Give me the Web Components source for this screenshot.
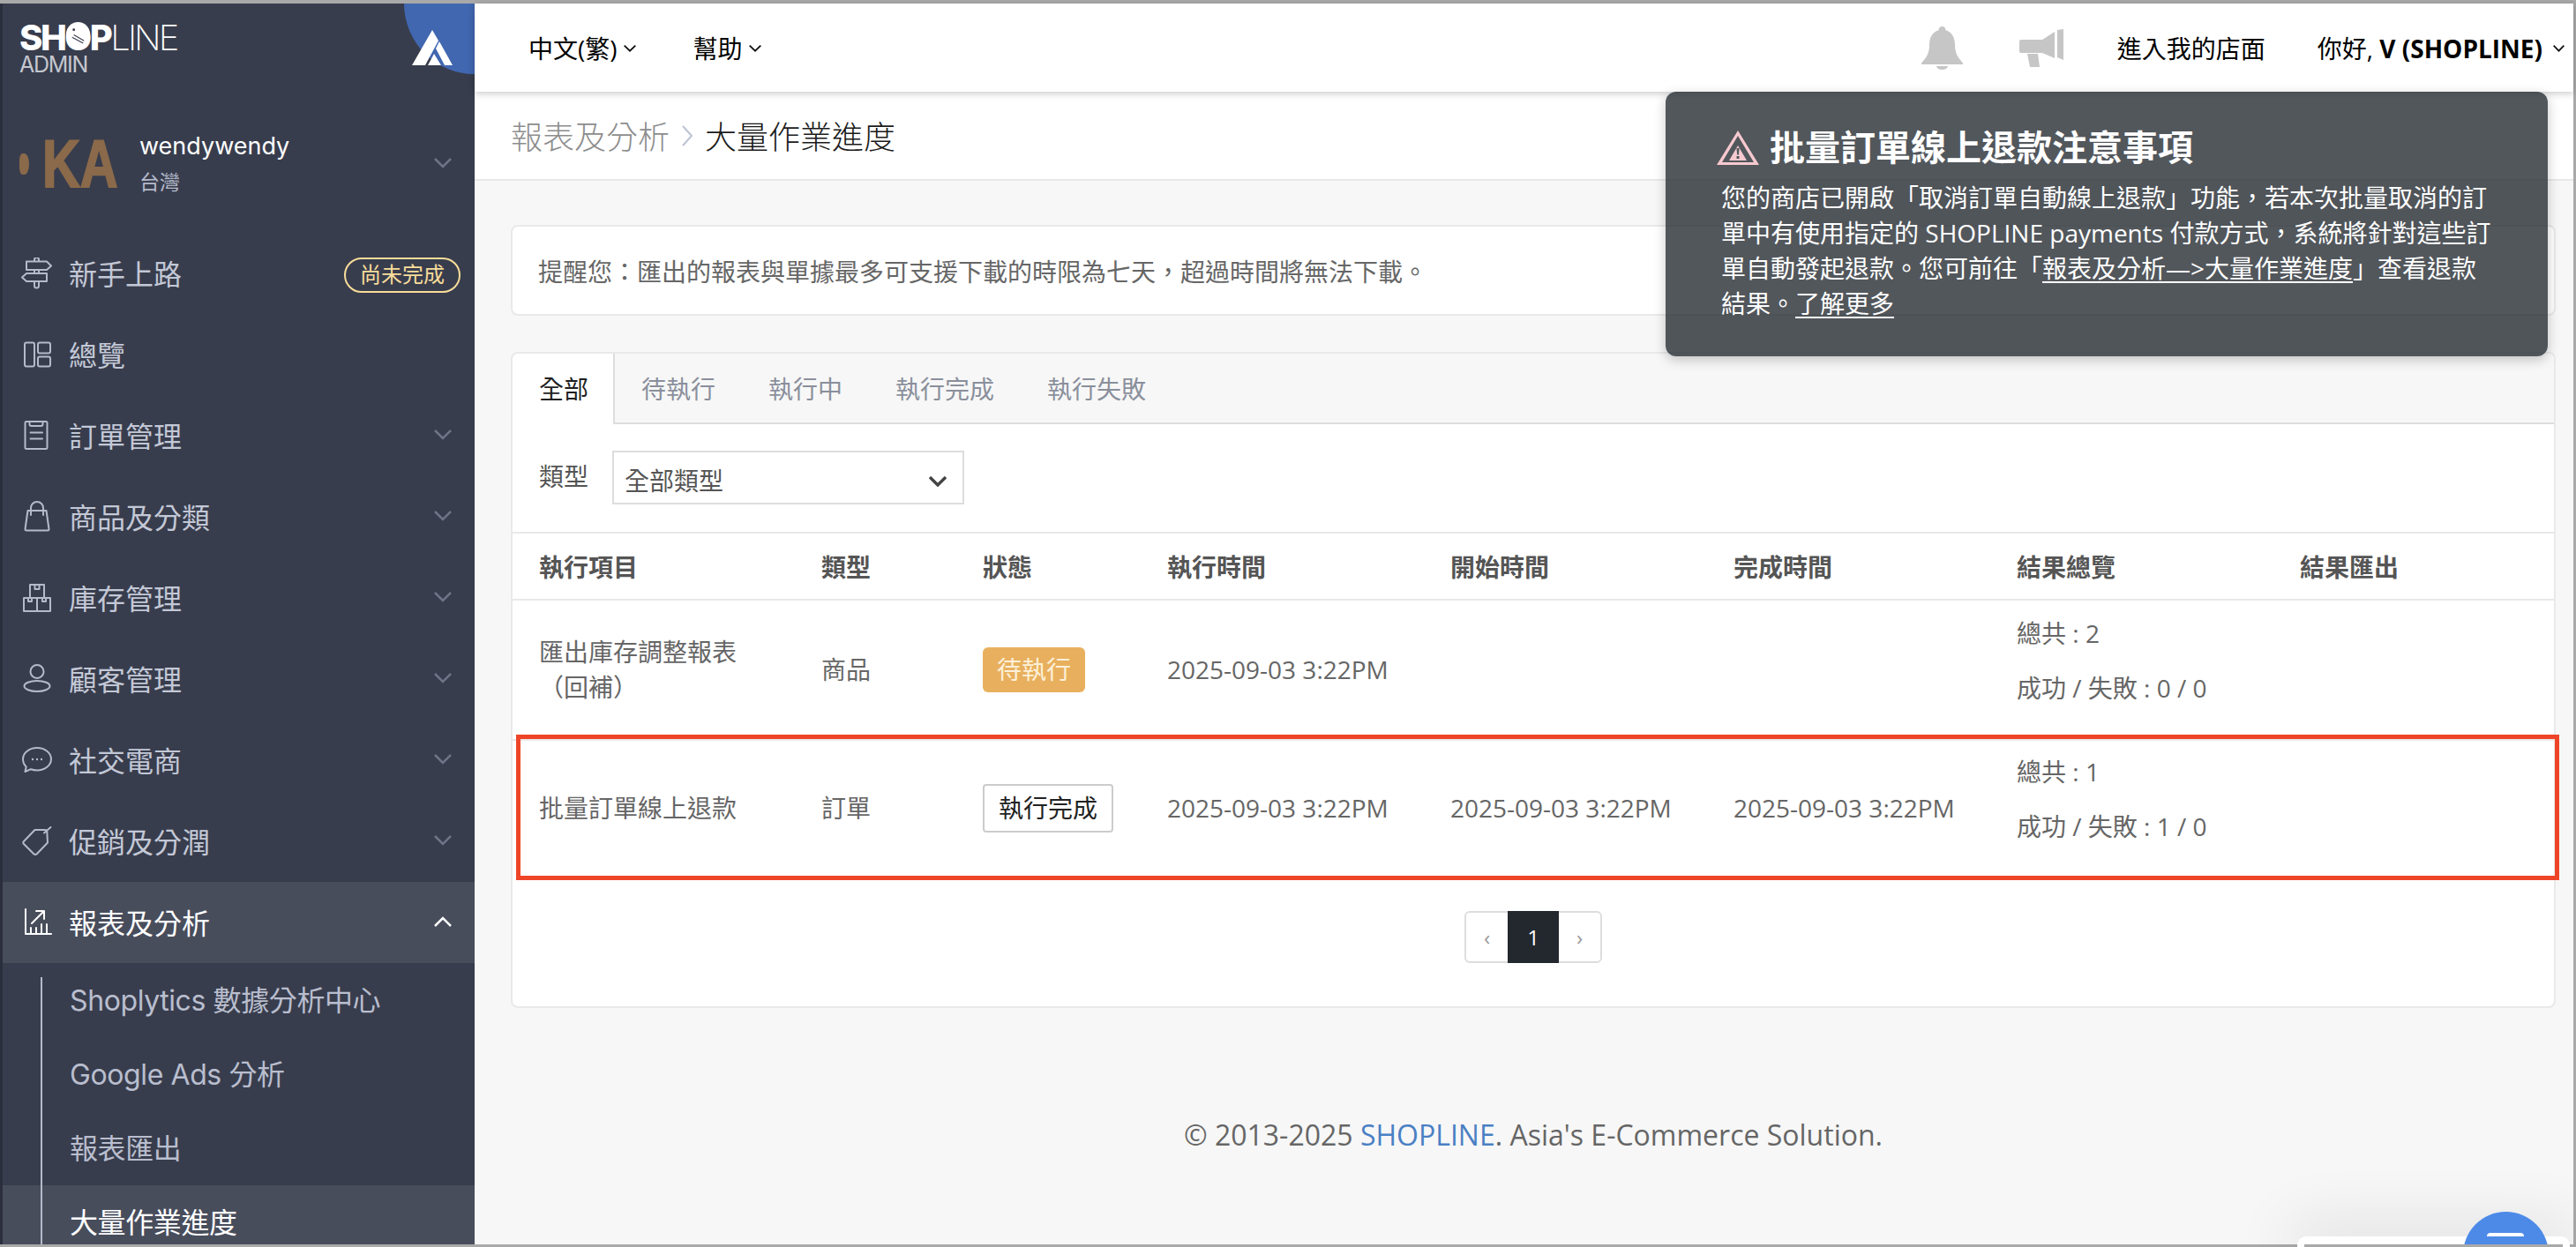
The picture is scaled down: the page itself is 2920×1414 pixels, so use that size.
<!DOCTYPE html>
<html lang="zh-Hant">
<head>
<meta charset="utf-8">
<title>大量作業進度</title>
<style>
    html, body { margin: 0; height: 100%; }
    body {
        width: 2920px;
        height: 1414px;
        overflow: hidden;
        font-family: "Open Sans", "Noto Sans CJK TC", sans-serif;
    }
</style>
</head>
<body>
<sl-app>
    <sl-sidebar slot="side">
        <sl-nav-item icon="sign" nochevron>新手上路<sl-pill slot="extra">尚未完成</sl-pill></sl-nav-item>
        <sl-nav-item icon="dash" nochevron>總覽</sl-nav-item>
        <sl-nav-item icon="order">訂單管理</sl-nav-item>
        <sl-nav-item icon="bag">商品及分類</sl-nav-item>
        <sl-nav-item icon="boxes">庫存管理</sl-nav-item>
        <sl-nav-item icon="person">顧客管理</sl-nav-item>
        <sl-nav-item icon="chat">社交電商</sl-nav-item>
        <sl-nav-item icon="tag">促銷及分潤</sl-nav-item>
        <sl-nav-item icon="chart" open>報表及分析</sl-nav-item>
        <sl-sub-nav>
            <sl-sub-item>Shoplytics 數據分析中心</sl-sub-item>
            <sl-sub-item>Google Ads 分析</sl-sub-item>
            <sl-sub-item>報表匯出</sl-sub-item>
            <sl-sub-item active>大量作業進度</sl-sub-item>
        </sl-sub-nav>
    </sl-sidebar>

    <sl-topbar slot="main"></sl-topbar>
    <sl-breadcrumb slot="main" parent="報表及分析">大量作業進度</sl-breadcrumb>
    <sl-content slot="main">
        <sl-notice>提醒您：匯出的報表與單據最多可支援下載的時限為七天，超過時間將無法下載。</sl-notice>
        <sl-jobs-card>
            <sl-job-row>
                <span slot="name">匯出庫存調整報表（回補）</span>
                <span slot="type">商品</span>
                <sl-status slot="status" kind="pending">待執行</sl-status>
                <span slot="run">2025-09-03 3:22PM</span>
                <sl-result slot="result" total="2" ok="0" fail="0"></sl-result>
            </sl-job-row>
            <sl-job-row highlighted>
                <span slot="name">批量訂單線上退款</span>
                <span slot="type">訂單</span>
                <sl-status slot="status" kind="done">執行完成</sl-status>
                <span slot="run">2025-09-03 3:22PM</span>
                <span slot="start">2025-09-03 3:22PM</span>
                <span slot="end">2025-09-03 3:22PM</span>
                <sl-result slot="result" total="1" ok="1" fail="0"></sl-result>
            </sl-job-row>
        </sl-jobs-card>
        <sl-footer></sl-footer>
    </sl-content>

    <sl-toast slot="over"></sl-toast>
    <sl-chat slot="over"></sl-chat>
</sl-app>

<script>
    /**
     * Icons of the sidebar, all drawn on a 36x36 box.
     */
    const NAV_ICONS = {
        sign: `<path d="M6 4.500h23l5 5-5 4.500H6zM29 18H6l-5 4.500L6 27h23zM15 4.500V2.500a2.500 2.500 0 0 1 5 0v2M15 14v4M20 14v4M15 27v5a2.500 2.500 0 0 0 5 0v-5"/>`,
        dash: `<rect x="4" y="4.500" width="11" height="27" rx="2"/><rect x="19" y="4.500" width="14" height="12" rx="2"/><rect x="19" y="20.500" width="14" height="11" rx="2"/>`,
        order: `<rect x="4.500" y="2" width="25" height="31" rx="1.500"/><path d="M9.500 2v3a2 2 0 0 0 2 2h11a2 2 0 0 0 2-2V2M10.500 14.500H24M10.500 21.500H24"/>`,
        bag: `<path d="M7.500 11h21l3 21a1.500 1.500 0 0 1-1.500 1.500H6A1.500 1.500 0 0 1 4.500 32zM11 16V8a7 7 0 0 1 14 0v8"/>`,
        boxes: `<path d="M10 18V3h16v15M3 33V18h30v15zM18 18v15M15.500 3v5h5V3M8 18v4h4v-4M24 18v4h4v-4"/>`,
        person: `<circle cx="18" cy="9.500" r="7.500"/><ellipse cx="18" cy="26" rx="14.500" ry="6"/>`,
        chat: `<path d="M18 4c8.800 0 16 5.600 16 12.700S26.800 29.400 18 29.400c-2.500 0-5-.4-7-1.200L4.500 31l1.200-5.500C3.400 23.200 2 20.100 2 16.700 2 9.600 9.200 4 18 4z"/><g fill="#b5bacb" stroke="none"><circle cx="13" cy="17" r="1.200"/><circle cx="18" cy="17" r="1.200"/><circle cx="23" cy="17" r="1.200"/></g>`,
        tag: `<path d="M3 18 15.500 5H27q2 0 2.300 2L30 19.500 18 32q-2 2-4 0L3 21q-1.500-1.500 0-3zM26 8.500 33.500 2"/>`,
        chart: `<path d="M5 3v28h29M11 31v-7M17 31v-7M23 31V20M29 31V20M12 19 25 6M17 5h9v9"/>`
    };

    const chevron = (w, h, color, stroke, up) => `
        <svg width="${w}" height="${h}" viewBox="0 0 20 12" fill="none" stroke="${color}" stroke-width="${stroke}" preserveAspectRatio="none">
            <path d="${up ? 'M1 11l9-9 9 9' : 'M1 1l9 9 9-9'}"/>
        </svg>`;

    /**
     * Base class: clones the class' markup into an open shadow root.
     */
    class SlElement extends HTMLElement {
        connectedCallback() {
            if (this.shadowRoot) {
                return;
            }

            const $template = document.createElement('template');
            $template.innerHTML = this.markup();

            this.attachShadow({ mode: 'open' }).appendChild($template.content.cloneNode(true));
        }
    }

    class SlApp extends SlElement {
        markup() {
            return `
                <style>
                    :host {
                        display: flex;
                        position: relative;
                        box-sizing: border-box;
                        width: 2920px;
                        height: 1414px;
                        padding: 4px 3px 3px 0;
                        background: #a9a9a9;
                        overflow: hidden;
                    }
                    .main {
                        flex: 1;
                        min-width: 0;
                        display: flex;
                        flex-direction: column;
                        background: #f7f7f7;
                    }
                </style>
                <slot name="side"></slot>
                <div class="main"><slot name="main"></slot></div>
                <slot name="over"></slot>
            `;
        }
    }

    class SlSidebar extends SlElement {
        markup() {
            return `
                <style>
                    :host {
                        display: block;
                        position: relative;
                        flex: none;
                        box-sizing: border-box;
                        width: 538px;
                        height: 1407px;
                        border-left: 3px solid #2b2f3d;
                        background: #383d4d;
                        overflow: hidden;
                        font-family: "Inter", "Noto Sans CJK TC", sans-serif;
                    }
                    .corner {
                        position: absolute;
                        top: 0;
                        right: 0;
                        width: 80px;
                        height: 80px;
                        background: #4167b0;
                        border-bottom-left-radius: 80px;
                    }
                    .mark {
                        position: absolute;
                        top: 30px;
                        right: 25px;
                    }
                    .brand {
                        height: 104px;
                        box-sizing: border-box;
                        padding: 14px 0 0 19px;
                        color: #fff;
                    }
                    .logo {
                        display: block;
                        font-size: 40px;
                        line-height: 50px;
                        white-space: nowrap;
                    }
                    .logo b { font-weight: 800; letter-spacing: -2.500px; }
                    .logo i { font-style: normal; font-weight: 200; letter-spacing: -3px; }
                    .logo .o { position: relative; }
                    .logo svg { position: absolute; left: 2px; top: 6px; }
                    .admin {
                        display: block;
                        margin-top: -9px;
                        font-size: 25px;
                        line-height: 28px;
                        letter-spacing: -1.300px;
                        color: #c4c7cf;
                    }
                    .profile {
                        display: flex;
                        align-items: center;
                        height: 156px;
                        padding: 0 26px 0 19px;
                    }
                    .avatar {
                        flex: none;
                        display: flex;
                        align-items: center;
                        width: 112px;
                        height: 70px;
                        color: #8a6a4a;
                        font-family: "Liberation Sans", sans-serif;
                        font-weight: 700;
                        font-size: 76px;
                        line-height: 70px;
                    }
                    .avatar .dot {
                        flex: none;
                        width: 11px;
                        height: 24px;
                        margin-right: 15px;
                        border-radius: 40% 60% 60% 40%;
                        background: #8a6a4a;
                    }
                    .avatar .ka {
                        flex: none;
                        width: 0;
                        transform: scale(.78, 1);
                        transform-origin: left center;
                        white-space: nowrap;
                        -webkit-text-stroke: 2px #8a6a4a;
                    }
                    .who { flex: 1; margin-left: 24px; }
                    .who b {
                        display: block;
                        margin-top: -2px;
                        font-weight: 400;
                        font-size: 27px;
                        line-height: 38px;
                        color: #fff;
                    }
                    .who span {
                        display: block;
                        margin-top: 6px;
                        font-size: 23px;
                        line-height: 32px;
                        color: #b5bacb;
                    }
                    .profile svg { margin-top: -2px; }
                </style>
                <div class="corner"></div>
                <svg class="mark" width="46" height="40" viewBox="0 0 46 40" fill="#fff">
                    <path d="M23 0 0 40h15L30 12zM31 13l15 27h-9L27 21zM25 27l-7 13h15z"/>
                </svg>
                <div class="brand">
                    <span class="logo"><b>SH<span class="o">O<svg width="27" height="29" viewBox="0 0 28 30"><circle cx="14" cy="15" r="14" fill="#fff"/><path d="M7 19l13 7M9 16l12 7" stroke="#383d4d" stroke-width="1.200"/><circle cx="9" cy="10" r="1.500" fill="#383d4d"/></svg></span>P</b><i>LINE</i></span>
                    <span class="admin">ADMIN</span>
                </div>
                <div class="profile">
                    <div class="avatar"><span class="dot"></span><span class="ka">KA</span></div>
                    <div class="who"><b>wendywendy</b><span>台灣</span></div>
                    ${chevron(20, 12, '#6f7488', 2.5)}
                </div>
                <slot></slot>
            `;
        }
    }

    class SlNavItem extends SlElement {
        markup() {
            const open = this.hasAttribute('open');
            const noChevron = this.hasAttribute('nochevron');
            const stroke = open ? '#fff' : '#b5bacb';

            return `
                <style>
                    :host {
                        display: flex;
                        align-items: center;
                        height: 92px;
                        padding: 0 26px 0 21px;
                        box-sizing: border-box;
                        font-size: 32px;
                        color: ${open ? '#fff' : '#c3c8d6'};
                        background: ${open ? '#484d5c' : 'transparent'};
                    }
                    svg.icon { flex: none; margin-right: 18px; }
                    svg:not(.icon) { margin-top: -2px; }
                    .label { flex: 1; margin-top: -3px; }
                    ::slotted([slot="extra"]) { margin-right: -10px; }
                </style>
                <svg class="icon" width="36" height="36" viewBox="0 0 36 36" fill="none" stroke="${stroke}" stroke-width="2" stroke-linejoin="round" stroke-linecap="round">
                    ${NAV_ICONS[this.getAttribute('icon')]}
                </svg>
                <span class="label"><slot></slot></span>
                <slot name="extra"></slot>
                ${noChevron ? '' : chevron(20, 12, open ? '#fff' : '#6f7488', 2.5, open)}
            `;
        }
    }

    class SlPill extends SlElement {
        markup() {
            return `
                <style>
                    :host {
                        display: block;
                        box-sizing: border-box;
                        width: 132px;
                        height: 40px;
                        margin-top: 3px;
                        border: 2px solid #f8dd9b;
                        border-radius: 20px;
                        font-size: 24px;
                        line-height: 35px;
                        text-align: center;
                        color: #f8dd9b;
                    }
                </style>
                <slot></slot>
            `;
        }
    }

    class SlSubNav extends SlElement {
        markup() {
            return `
                <style>
                    :host { display: block; position: relative; }
                    :host::after {
                        content: "";
                        position: absolute;
                        top: 16px;
                        bottom: 0;
                        left: 43px;
                        width: 2px;
                        background: #b5bacb;
                    }
                </style>
                <slot></slot>
            `;
        }
    }

    class SlSubItem extends SlElement {
        markup() {
            const active = this.hasAttribute('active');

            return `
                <style>
                    :host {
                        display: flex;
                        align-items: center;
                        box-sizing: border-box;
                        height: 84px;
                        padding: 0 0 5px 76px;
                        font-size: 32px;
                        letter-spacing: -.4px;
                        white-space: nowrap;
                        color: ${active ? '#fff' : '#b9bece'};
                        background: ${active ? '#484d5c' : 'transparent'};
                    }
                </style>
                <slot></slot>
            `;
        }
    }

    class SlTopbar extends SlElement {
        markup() {
            return `
                <style>
                    :host {
                        display: flex;
                        align-items: center;
                        position: relative;
                        z-index: 1;
                        flex: none;
                        height: 100px;
                        padding: 0 10px 0 61px;
                        background: #fff;
                        box-shadow: 0 2px 8px rgba(0, 0, 0, .22);
                        font-size: 28px;
                        color: #000;
                    }
                    .item { display: flex; align-items: center; gap: 7px; white-space: nowrap; }
                    .item svg { margin-top: 2px; }
                    .help { margin-left: 65px; }
                    .bell { margin-left: auto; }
                    .horn { margin-left: 64px; }
                    .shop { margin-left: 61px; }
                    .user { margin-left: 59px; gap: 12px; }
                    b { font-weight: 700; }
                </style>
                <span class="item">中文(繁)${chevron(14, 8, '#111', 2.6)}</span>
                <span class="item help">幫助${chevron(14, 8, '#111', 2.6)}</span>
                <svg class="bell" width="47" height="49" viewBox="0 0 47 49" fill="#c6c6c6">
                    <path d="M23.500 0c-2.500 0-4 1.800-4 4.200C12 6.500 9 13 9 21c0 9-3 14-9 20.500V43h47v-1.500C41 35 38 30 38 21c0-8-3-14.500-10.500-16.800 0-2.400-1.500-4.200-4-4.200z"/>
                    <path d="M17 45a6.500 4 0 0 0 13 0z"/>
                </svg>
                <svg class="horn" width="50" height="43" viewBox="0 0 50 43" fill="#c6c6c6">
                    <path d="M2 12h24L40 3v30L26 27H2a2 2 0 0 1-2-2V14a2 2 0 0 1 2-2zM9 28h12l2 15H12zM43 1l7-1v35l-7-3z"/>
                </svg>
                <span class="item shop">進入我的店面</span>
                <span class="item user"><span>你好, <b>V (SHOPLINE)</b></span>${chevron(13, 8, '#111', 2.6)}</span>
            `;
        }
    }

    class SlBreadcrumb extends SlElement {
        markup() {
            return `
                <style>
                    :host {
                        display: flex;
                        align-items: center;
                        flex: none;
                        height: 99px;
                        padding-left: 41px;
                        background: #fff;
                        border-bottom: 2px solid #e8e8e8;
                        font-size: 36px;
                        font-weight: 300;
                        color: #1a1a1a;
                    }
                    .parent { color: #8d8d8d; }
                    svg { margin: 0 13px 0 14px; }
                </style>
                <span class="parent">${this.getAttribute('parent')}</span>
                <svg width="13" height="24" viewBox="0 0 13 24" fill="none" stroke="#bcc3d2" stroke-width="2"><path d="M1 1l10 11L1 23"/></svg>
                <slot></slot>
            `;
        }
    }

    class SlContent extends SlElement {
        markup() {
            return `
                <style>
                    :host {
                        display: block;
                        flex: 1;
                        min-height: 0;
                        padding: 50px 20px 0 41px;
                        font-size: 28px;
                        color: #666;
                    }
                </style>
                <slot></slot>
            `;
        }
    }

    class SlNotice extends SlElement {
        markup() {
            return `
                <style>
                    :host {
                        display: flex;
                        align-items: center;
                        box-sizing: border-box;
                        height: 103px;
                        padding-left: 29px;
                        border: 2px solid #e9e9e9;
                        border-radius: 8px;
                        background: #fff;
                    }
                </style>
                <slot></slot>
            `;
        }
    }

    class SlJobsCard extends SlElement {
        markup() {
            return `
                <style>
                    :host {
                        display: block;
                        margin-top: 41px;
                        border: 2px solid #e9e9e9;
                        border-radius: 8px;
                        background: #fff;
                    }
                    .tabs {
                        display: flex;
                        height: 78px;
                        border-bottom: 2px solid #ddd;
                        border-radius: 8px 8px 0 0;
                        background: #f7f7f7;
                        color: #8a8f9c;
                        line-height: 80px;
                    }
                    .tabs span { padding: 0 30px; white-space: nowrap; }
                    .tabs .on {
                        height: 80px;
                        padding-right: 28px;
                        background: #fff;
                        color: #1f1f1f;
                        border-right: 2px solid #ddd;
                        border-radius: 8px 0 0 0;
                    }
                    .filter {
                        display: flex;
                        gap: 27px;
                        height: 92px;
                        padding: 30px 30px 0;
                        border-bottom: 2px solid #e8e8e8;
                    }
                    .filter label { line-height: 58px; color: #555; }
                    .select {
                        display: flex;
                        align-items: center;
                        justify-content: space-between;
                        box-sizing: border-box;
                        width: 399px;
                        height: 61px;
                        padding: 5px 18px 0 12px;
                        border: 2px solid #ddd;
                        color: #555;
                    }
                    .select svg { margin-top: 3px; }
                    .head {
                        display: grid;
                        grid-template-columns: 320px 183px 209px 321px 321px 321px 321px 1fr;
                        align-items: center;
                        height: 74px;
                        border-bottom: 2px solid #e8e8e8;
                        font-weight: 700;
                        color: #555;
                    }
                    .head span { padding-left: 30px; }
                    .pager {
                        display: flex;
                        justify-content: center;
                        margin: 40px 0 49px;
                    }
                </style>
                <div class="tabs">
                    <span class="on">全部</span><span>待執行</span><span>執行中</span><span>執行完成</span><span>執行失敗</span>
                </div>
                <div class="filter">
                    <label>類型</label>
                    <div class="select">全部類型 ${chevron(20, 12, '#444', 3.4)}</div>
                </div>
                <div class="head">
                    <span>執行項目</span><span>類型</span><span>狀態</span><span>執行時間</span><span>開始時間</span><span>完成時間</span><span>結果總覽</span><span>結果匯出</span>
                </div>
                <slot></slot>
                <div class="pager"><sl-pagination></sl-pagination></div>
            `;
        }
    }

    class SlJobRow extends SlElement {
        markup() {
            const highlighted = this.hasAttribute('highlighted');

            return `
                <style>
                    :host {
                        display: grid;
                        grid-template-columns: 320px 183px 209px 321px 321px 321px 321px 1fr;
                        align-items: center;
                        position: relative;
                        height: ${highlighted ? 153 : 157}px;
                        margin-bottom: ${highlighted ? 3 : 0}px;
                        border-bottom: ${highlighted ? 0 : 2}px solid #e8e8e8;
                    }
                    .cell { padding: 0 0 2px 30px; line-height: 40px; }
                    .name { padding-right: 30px; }
                    ::slotted(sl-status) { margin-top: 2px; }
                    .frame {
                        position: absolute;
                        top: -7px;
                        left: 4px;
                        right: -6px;
                        bottom: -5px;
                        border: 5px solid #ee4528;
                        pointer-events: none;
                    }
                </style>
                <div class="cell name"><slot name="name"></slot></div>
                <div class="cell"><slot name="type"></slot></div>
                <div class="cell"><slot name="status"></slot></div>
                <div class="cell"><slot name="run"></slot></div>
                <div class="cell"><slot name="start"></slot></div>
                <div class="cell"><slot name="end"></slot></div>
                <div class="cell"><slot name="result"></slot></div>
                <div class="cell"><slot name="export"></slot></div>
                ${highlighted ? '<div class="frame"></div>' : ''}
            `;
        }
    }

    class SlStatus extends SlElement {
        markup() {
            const pending = this.getAttribute('kind') === 'pending';

            return `
                <style>
                    :host {
                        display: inline-block;
                        box-sizing: border-box;
                        vertical-align: middle;
                        padding: 0 16px;
                        height: ${pending ? 51 : 55}px;
                        line-height: 51px;
                        border-radius: ${pending ? 6 : 4}px;
                        white-space: nowrap;
                        color: ${pending ? '#fdf0d8' : '#222'};
                        background: ${pending ? '#e8b05e' : '#fff'};
                        border: ${pending ? 'none' : '2px solid #ccc'};
                    }
                </style>
                <slot></slot>
            `;
        }
    }

    class SlResult extends SlElement {
        markup() {
            const total = this.getAttribute('total');
            const ok = this.getAttribute('ok');
            const fail = this.getAttribute('fail');

            return `
                <style>
                    :host { display: block; padding-top: 3px; }
                    p { margin: 0 0 22.500px; line-height: 40px; white-space: nowrap; }
                </style>
                <p>總共 : ${total}</p>
                <p>成功 / 失敗 : ${ok} / ${fail}</p>
            `;
        }
    }

    class SlPagination extends SlElement {
        markup() {
            return `
                <style>
                    :host {
                        display: flex;
                        box-sizing: border-box;
                        height: 59px;
                        border: 2px solid #ddd;
                        border-radius: 6px;
                        font-size: 24px;
                        line-height: 55px;
                        text-align: center;
                        color: #999;
                    }
                    span { width: 47px; }
                    .on {
                        width: 58px;
                        margin: -2px 0;
                        line-height: 59px;
                        color: #fff;
                        background: #23282f;
                    }
                </style>
                <span>‹</span><span class="on">1</span><span>›</span>
            `;
        }
    }

    class SlFooter extends SlElement {
        markup() {
            return `
                <style>
                    :host {
                        display: block;
                        margin-top: 122px;
                        font-size: 32px;
                        line-height: 44px;
                        text-align: center;
                        color: #666;
                    }
                    a { color: #4a80c4; text-decoration: none; }
                </style>
                © 2013-2025 <a>SHOPLINE</a>. Asia's E-Commerce Solution.
            `;
        }
    }

    class SlToast extends SlElement {
        markup() {
            return `
                <style>
                    :host {
                        display: block;
                        position: absolute;
                        z-index: 2;
                        top: 104px;
                        left: 1888px;
                        box-sizing: border-box;
                        width: 1000px;
                        height: 300px;
                        padding: 39px 0 0 63px;
                        border-radius: 12px;
                        background: rgba(33, 40, 46, .78);
                        box-shadow: 0 4px 14px rgba(0, 0, 0, .22);
                        color: #fff;
                        font-size: 28px;
                        line-height: 40px;
                        white-space: nowrap;
                    }
                    h3 {
                        display: flex;
                        align-items: center;
                        margin: 0 0 13px -5px;
                        font-size: 40px;
                        line-height: 48px;
                        font-weight: 700;
                    }
                    svg { margin-right: 12px; flex: none; }
                    u { text-underline-offset: 4px; }
                </style>
                <h3>
                    <svg width="48" height="39" viewBox="0 0 48 39"><path fill-rule="evenodd" fill="#f6c9cf" d="M24 0 48 39H0zM24 6 6 36h36z"/><path fill-rule="evenodd" fill="#f6c9cf" d="M24 17 34 34H14zM22.500 20l.6 7.500h1.800l.6-7.500zM22.500 29v3h3v-3z"/></svg>
                    批量訂單線上退款注意事項
                </h3>
                您的商店已開啟「取消訂單自動線上退款」功能，若本次批量取消的訂<br>
                單中有使用指定的 SHOPLINE payments 付款方式，系統將針對這些訂<br>
                單自動發起退款。您可前往「<u>報表及分析—&gt;大量作業進度</u>」查看退款<br>
                結果。<u>了解更多</u>
            `;
        }
    }

    class SlChat extends SlElement {
        markup() {
            return `
                <style>
                    :host {
                        display: block;
                        position: absolute;
                        z-index: 1;
                        right: 7px;
                        bottom: 0;
                        width: 309px;
                        height: 12px;
                        border-radius: 10px 10px 0 0;
                        background: #fff;
                        box-shadow: 0 0 70px 10px rgba(0, 0, 0, .14);
                    }
                    .bubble {
                        position: absolute;
                        z-index: -1;
                        left: 188px;
                        top: -28px;
                        width: 97px;
                        height: 97px;
                        border-radius: 50%;
                        background: #4d8ae8;
                    }
                    .pill {
                        position: absolute;
                        left: 215px;
                        top: -4px;
                        width: 42px;
                        height: 4px;
                        border-radius: 5px 5px 0 0;
                        background: #fff;
                    }
                    .strip {
                        position: absolute;
                        left: 8px;
                        right: 8px;
                        bottom: 0;
                        height: 3px;
                        background: #a9a9a9;
                    }
                </style>
                <div class="bubble"></div><div class="pill"></div><div class="strip"></div>
            `;
        }
    }

    customElements.define('sl-app', SlApp);
    customElements.define('sl-sidebar', SlSidebar);
    customElements.define('sl-nav-item', SlNavItem);
    customElements.define('sl-pill', SlPill);
    customElements.define('sl-sub-nav', SlSubNav);
    customElements.define('sl-sub-item', SlSubItem);
    customElements.define('sl-topbar', SlTopbar);
    customElements.define('sl-breadcrumb', SlBreadcrumb);
    customElements.define('sl-content', SlContent);
    customElements.define('sl-notice', SlNotice);
    customElements.define('sl-jobs-card', SlJobsCard);
    customElements.define('sl-job-row', SlJobRow);
    customElements.define('sl-status', SlStatus);
    customElements.define('sl-result', SlResult);
    customElements.define('sl-pagination', SlPagination);
    customElements.define('sl-footer', SlFooter);
    customElements.define('sl-toast', SlToast);
    customElements.define('sl-chat', SlChat);
</script>
</body>
</html>
